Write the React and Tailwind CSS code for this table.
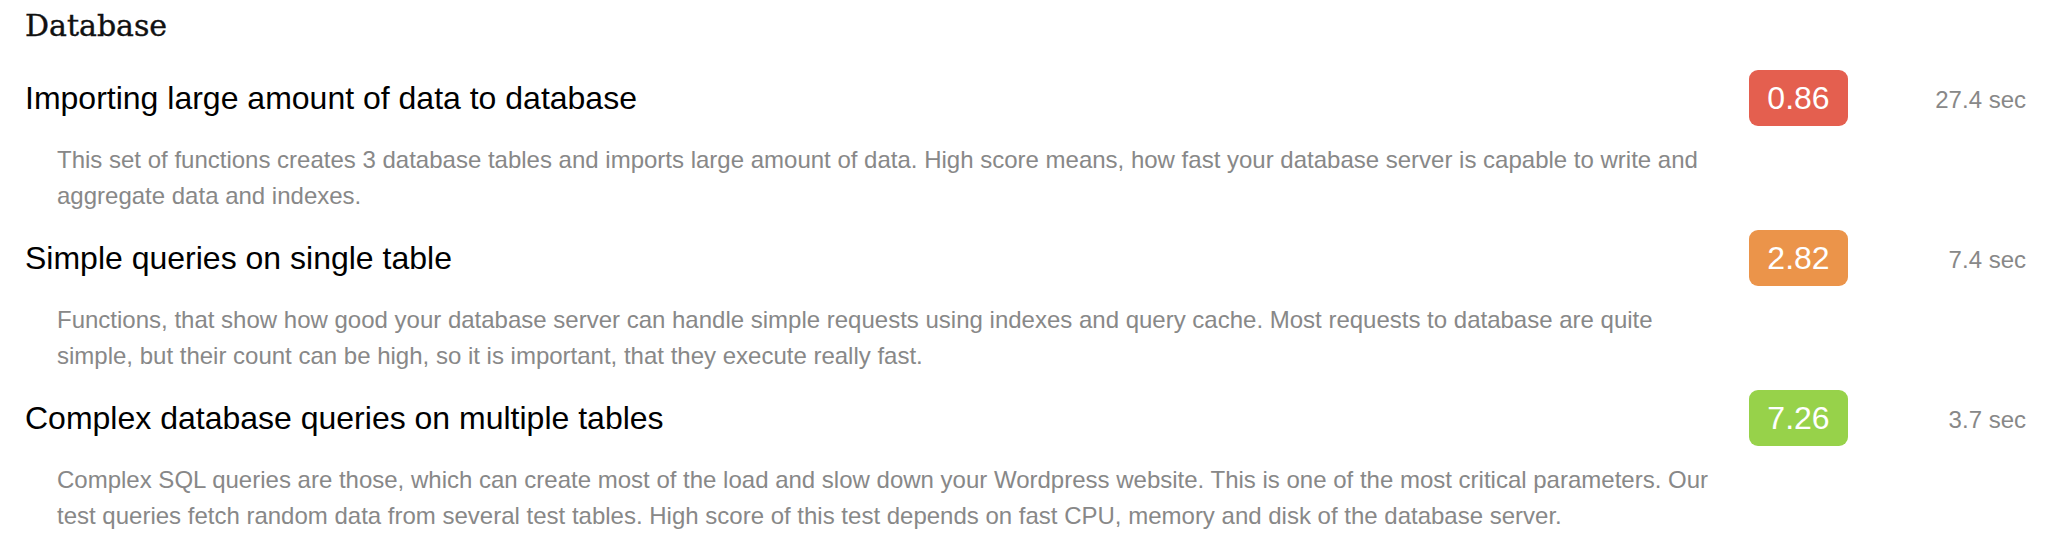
const TESTS = [
  {
    title: "Importing large amount of data to database",
    score: "0.86",
    color: "bg-[#e45f4f]",
    time: "27.4 sec",
    text: "This set of functions creates 3 database tables and imports large amount of data. High score means, how fast your database server is capable to write and aggregate data and indexes.",
  },
  {
    title: "Simple queries on single table",
    score: "2.82",
    color: "bg-[#eb944a]",
    time: "7.4 sec",
    text: "Functions, that show how good your database server can handle simple requests using indexes and query cache. Most requests to database are quite simple, but their count can be high, so it is important, that they execute really fast.",
  },
  {
    title: "Complex database queries on multiple tables",
    score: "7.26",
    color: "bg-[#97d24a]",
    time: "3.7 sec",
    text: "Complex SQL queries are those, which can create most of the load and slow down your Wordpress website. This is one of the most critical parameters. Our test queries fetch random data from several test tables. High score of this test depends on fast CPU, memory and disk of the database server.",
  },
];

// ── one benchmark row ─────────────────────────────────────────────────────────
const TestRow = ({ title, score, color, time, text }) => (
  <div className="flex flex-col">
    <div className="flex items-center h-[56px]">
      <h3 className="flex-1 text-[32px] leading-[40px] text-black">{title}</h3>
      <span className={`${color} w-[99px] h-[56px] rounded-[9px] flex items-center justify-center text-white text-[32px]`}>
        {score}
      </span>
      <span className="w-[178px] text-right text-[24px] text-[#888888] pt-[4px]">{time}</span>
    </div>
    <p className="mt-[16px] mb-[16px] pl-[32px] pr-[291px] text-[24px] leading-[36px] text-[#888888]">{text}</p>
  </div>
);

export default function App() {
  return (
    <div className="w-full min-h-screen bg-white pl-[25px] pr-[36px] pt-[8px] font-['Liberation_Sans',Arial,sans-serif]">
      <h2 className="font-['DejaVu_Serif',serif] text-[30px] leading-[36px] text-[#111111] [-webkit-text-stroke:0.4px_#111111] mb-[26px]">Database</h2>
      {TESTS.map((t) => (
        <TestRow key={t.title} {...t} />
      ))}
    </div>
  );
}
